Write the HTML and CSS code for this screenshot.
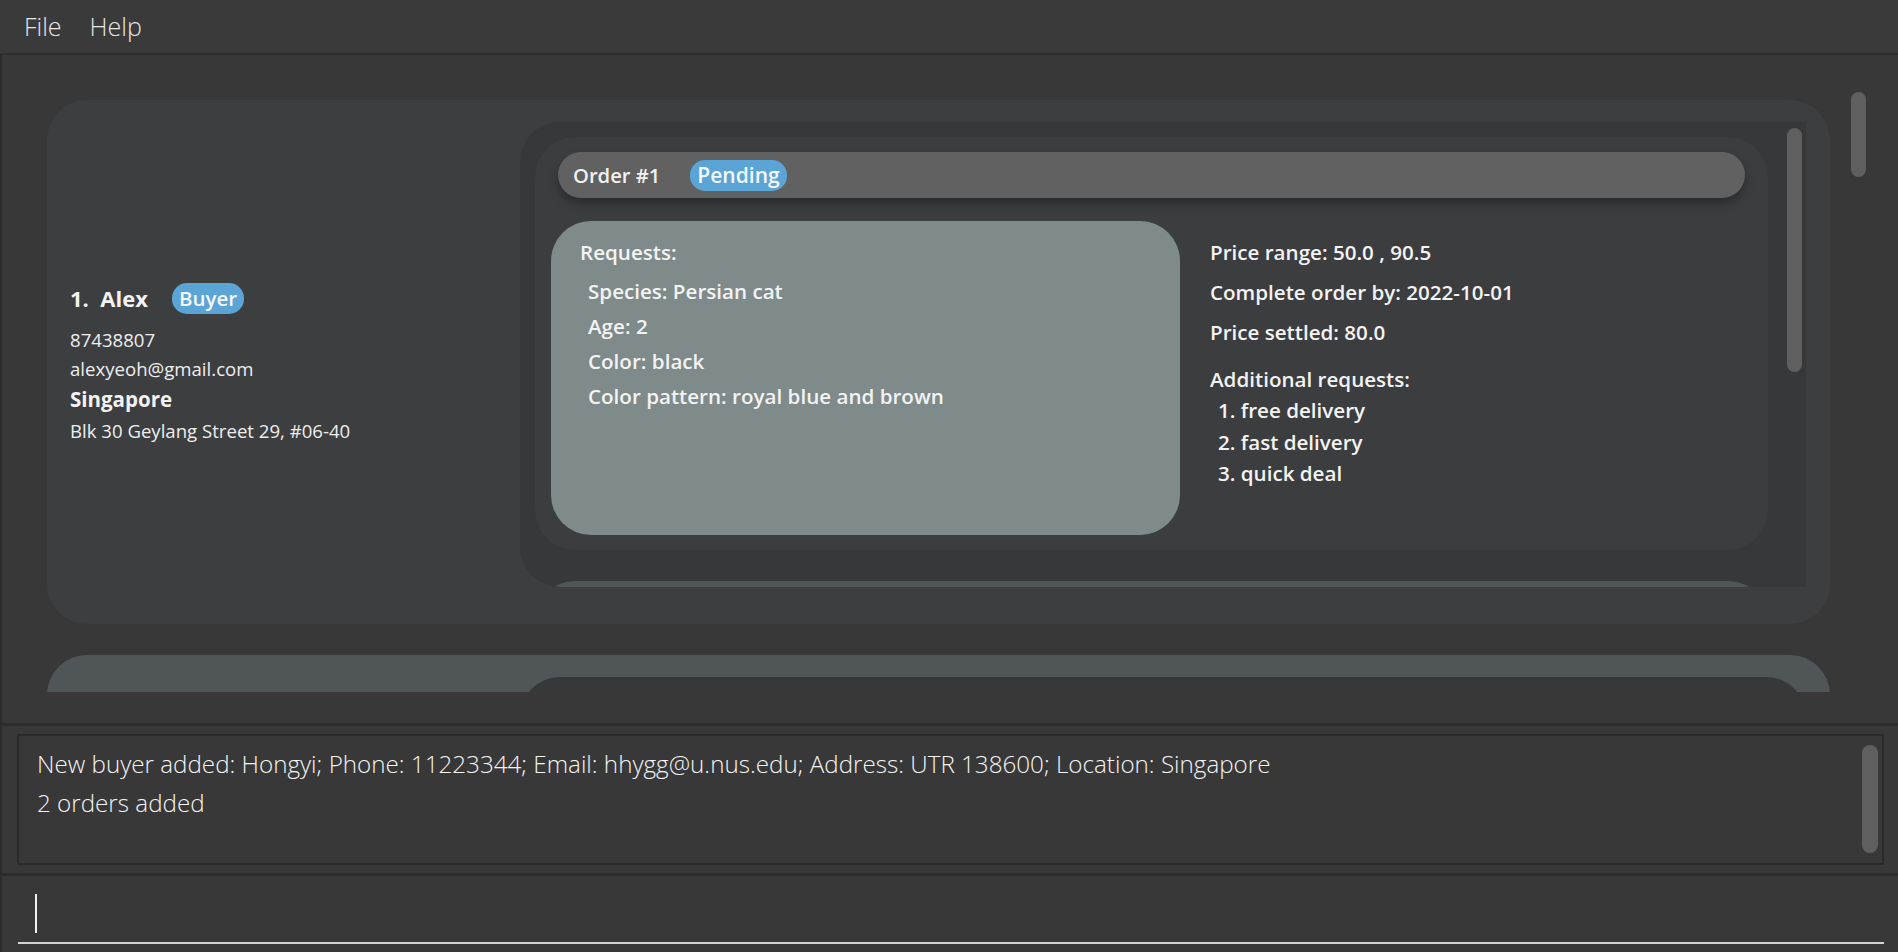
FILE: index.html
```html
<!DOCTYPE html>
<html lang="en">
<head>
<meta charset="utf-8">
<title>Buyer list</title>
<link rel="stylesheet" href="styles.css">
</head>
<body>
<div class="app">
  <div class="menubar">
    <span class="menu-item">File</span>
    <span class="menu-item">Help</span>
  </div>

  <div class="list-panel">
    <div class="list-viewport">
      <div class="person-card">
        <div class="person-info">
          <div class="name-row">
            <span class="name">1.&nbsp; Alex</span>
            <span class="badge">Buyer</span>
          </div>
          <div class="info-line">87438807</div>
          <div class="info-line">alexyeoh@gmail.com</div>
          <div class="location">Singapore</div>
          <div class="info-line">Blk 30 Geylang Street 29, #06-40</div>
        </div>
        <div class="orders">
          <div class="orders-viewport">
            <div class="order-card">
              <div class="order-header">
                <span class="order-title">Order #1</span>
                <span class="badge badge-status">Pending</span>
              </div>
              <div class="order-body">
                <div class="requests">
                  <div class="requests-title">Requests:</div>
                  <div class="request-item">Species: Persian cat</div>
                  <div class="request-item">Age: 2</div>
                  <div class="request-item">Color: black</div>
                  <div class="request-item">Color pattern: royal blue and brown</div>
                </div>
                <div class="order-details">
                  <div class="detail-line">Price range: 50.0 , 90.5</div>
                  <div class="detail-line">Complete order by: 2022-10-01</div>
                  <div class="detail-line">Price settled: 80.0</div>
                  <div class="additional-title">Additional requests:</div>
                  <div class="additional-item">1. free delivery</div>
                  <div class="additional-item">2. fast delivery</div>
                  <div class="additional-item">3. quick deal</div>
                </div>
              </div>
            </div>
            <div class="order-card order-card-alt"></div>
          </div>
          <div class="orders-scrollbar"><div class="thumb orders-thumb"></div></div>
        </div>
      </div>

      <div class="person-card person-card-alt">
        <div class="person-info"></div>
        <div class="orders orders-rounded"></div>
      </div>
    </div>
    <div class="list-scrollbar"><div class="thumb list-thumb"></div></div>
  </div>

  <div class="result-panel">
    <div class="result-box">
      <div class="result-text">
        <div>New buyer added: Hongyi; Phone: 11223344; Email: hhygg@u.nus.edu; Address: UTR 138600; Location: Singapore</div>
        <div>2 orders added</div>
      </div>
      <div class="result-scrollbar"><div class="thumb result-thumb"></div></div>
    </div>
  </div>

  <div class="command-panel">
    <div class="command-box"><span class="caret"></span></div>
  </div>
</div>
</body>
</html>
```

FILE: styles.css
```css
* { box-sizing: border-box; }

html, body {
  margin: 0;
  padding: 0;
  background: #383838;
  font-family: "Open Sans", "Noto Sans", "Liberation Sans", sans-serif;
  color: #f2f2f2;
}

.app {
  width: 1898px;
  height: 952px;
  display: flex;
  flex-direction: column;
  overflow: hidden;
}

/* ---------- menu ---------- */
.menubar {
  height: 55px;
  flex: none;
  display: flex;
  align-items: center;
  gap: 28px;
  padding: 0 0 2px 24px;
  background: #3a3a3a;
  border-bottom: 2px solid #2e2e2e;
}

.menu-item {
  font-size: 25px;
  font-weight: 300;
  color: #e6e6e6;
}

/* ---------- person list ---------- */
.list-panel {
  position: relative;
  height: 668px;
  flex: none;
  border-left: 2px solid #2c2c2c;
  background: #383838;
}

.list-viewport {
  height: 637px;
  overflow: hidden;
  padding: 45px 0 0 45px;
  display: flex;
  flex-direction: column;
  gap: 31px;
}

.person-card {
  flex: none;
  width: 1783px;
  height: 524px;
  border-radius: 40px;
  background: #3d3e40;
  display: flex;
  padding: 22px 24px 37px 0;
}

.person-card-alt {
  background: #505558;
}

.person-info {
  width: 473px;
  flex: none;
  align-self: center;
  padding: 18px 0 0 23px;
}

.name-row {
  height: 31px;
  display: flex;
  align-items: center;
  gap: 24px;
  margin-bottom: 11px;
}

.name {
  font-size: 22px;
  font-weight: 700;
}

.badge {
  display: inline-flex;
  align-items: center;
  height: 31px;
  padding: 0 7px;
  border-radius: 15px;
  background: #5aa4d6;
  color: #f4f8fb;
  font-size: 20.5px;
  font-weight: 600;
}

.info-line {
  font-size: 18.6px;
  line-height: 29px;
  color: #eeeeee;
}

.location {
  font-size: 20.5px;
  font-weight: 700;
  line-height: 33px;
}

/* ---------- orders list ---------- */
.orders {
  flex: 1;
  display: flex;
  background: #37383a;
  border-radius: 40px 0 0 40px;
  overflow: hidden;
}

.orders-rounded {
  border-radius: 40px;
}

.orders-viewport {
  flex: 1;
  overflow: hidden;
  padding: 15px 0 0 15px;
  display: flex;
  flex-direction: column;
  gap: 31px;
}

.order-card {
  flex: none;
  height: 413px;
  border-radius: 40px;
  background: #3c3d3f;
  padding: 15px 23px 15px 16px;
  display: flex;
  flex-direction: column;
}

.order-card-alt {
  background: #505558;
}

.order-header {
  height: 46px;
  flex: none;
  margin-left: 7px;
  border-radius: 23px;
  background: #616161;
  box-shadow: 0 6px 10px rgba(0, 0, 0, 0.28);
  display: flex;
  align-items: center;
  gap: 30px;
  padding-left: 15px;
}

.order-title {
  font-size: 20.2px;
  font-weight: 600;
}

.badge-status {
  font-size: 21px;
}

.order-body {
  flex: 1;
  display: flex;
  gap: 30px;
  margin-top: 23px;
}

.requests {
  width: 629px;
  flex: none;
  border-radius: 40px;
  background: #7f8b8b;
  padding: 14px 0 0 29px;
}

.requests-title,
.request-item,
.detail-line,
.additional-title,
.additional-item {
  font-size: 20.6px;
  font-weight: 600;
  color: #f3f3f3;
}

.requests-title {
  line-height: 34px;
  margin-bottom: 5px;
}

.request-item {
  line-height: 35px;
  padding-left: 8px;
}

.order-details {
  padding-top: 11px;
}

.detail-line {
  line-height: 40px;
}

.additional-title {
  line-height: 32px;
  margin-top: 11px;
}

.additional-item {
  line-height: 31.5px;
  padding-left: 8px;
}

/* ---------- scrollbars ---------- */
.thumb {
  background: #5f5f5f;
  border-radius: 8px;
}

.orders-scrollbar {
  width: 38px;
  flex: none;
  padding: 6px 4px 0 19px;
}

.orders-thumb {
  width: 15px;
  height: 244px;
}

.list-scrollbar {
  position: absolute;
  top: 37px;
  right: 32px;
}

.list-thumb {
  width: 15px;
  height: 85px;
}

/* ---------- result display ---------- */
.result-panel {
  height: 150px;
  flex: none;
  border-top: 3px solid #2c2c2c;
  border-left: 2px solid #2c2c2c;
  padding: 8px 14px 8px 15px;
}

.result-box {
  height: 131px;
  border: 2px solid #2a2a2a;
  background: #383838;
  display: flex;
  justify-content: space-between;
}

.result-text {
  padding: 8px 0 0 18px;
  font-size: 24.2px;
  font-weight: 300;
  line-height: 39px;
  color: #f4f4f4;
}

.result-scrollbar {
  padding: 9px 4px 0 0;
}

.result-thumb {
  width: 16px;
  height: 108px;
}

/* ---------- command box ---------- */
.command-panel {
  flex: 1;
  border-top: 3px solid #2c2c2c;
  border-left: 2px solid #2c2c2c;
  padding: 0 14px 8px 16px;
  display: flex;
}

.command-box {
  flex: 1;
  border-bottom: 2px solid #d4d4d4;
  padding: 18px 0 0 17px;
}

.caret {
  display: block;
  width: 2px;
  height: 39px;
  background: #f0f0f0;
}
```
